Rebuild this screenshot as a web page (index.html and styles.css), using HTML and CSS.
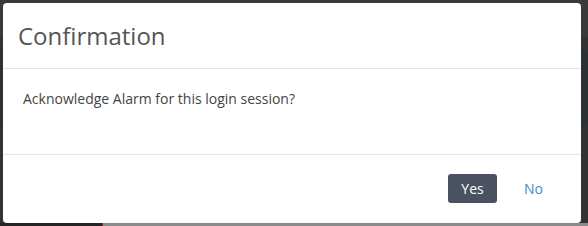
FILE: index.html
```html
<!DOCTYPE html>
<html>
<head>
<meta charset="utf-8">
<link rel="stylesheet" href="styles.css">
</head>
<body>
<div class="backdrop">
  <div class="modal">
    <div class="modal-header"><h4 class="modal-title">Confirmation</h4></div>
    <div class="modal-body">Acknowledge Alarm for this login session?</div>
    <div class="modal-footer">
      <button class="btn btn-yes">Yes</button>
      <button class="btn btn-no">No</button>
    </div>
  </div>
  <div class="bottom-strip"><span class="strip-dark"></span><span class="strip-red"></span><span class="strip-gray"></span></div>
</div>
</body>
</html>
```
FILE: styles.css
```css
html, body {
  margin: 0;
  padding: 0;
  width: 588px;
  height: 226px;
  overflow: hidden;
  background: #353535;
  font-family: "Open Sans", "DejaVu Sans", sans-serif;
}
.backdrop {
  width: 588px;
  height: 226px;
  padding: 3px 0 0 3px;
  box-sizing: border-box;
  background: linear-gradient(#3a3a3a 0, #3a3a3a 37px, #333 37px, #333 50px, #2c3234 50px, #2c3234 125px, #333 125px);
  position: relative;
}
.modal {
  width: 578px;
  height: 220px;
  background: #fff;
  border-radius: 4px;
  display: flex;
  flex-direction: column;
  position: relative;
  z-index: 1;
}
.modal-header {
  padding: 15px 15px;
  border-bottom: 1px solid #e5e5e5;
}
.modal-title {
  margin: 0;
  font-size: 24px;
  line-height: 35px;
  font-weight: 400;
  color: #555;
}
.modal-body {
  padding: 20px 20px 45px;
  font-size: 14px;
  line-height: 20px;
  color: #444;
}
.modal-footer {
  flex: 1;
  border-top: 1px solid #e5e5e5;
  display: flex;
  justify-content: flex-end;
  align-items: flex-start;
  padding: 19px 26px 0 0;
  gap: 15px;
}
.btn {
  font-family: "Open Sans", "DejaVu Sans", sans-serif;
  font-size: 14px;
  border: none;
  height: 29px;
  padding: 0 12px;
  border-radius: 3px;
  cursor: pointer;
  margin: 0;
}
.btn-yes {
  background: #4a5160;
  color: #fff;
  width: 49px;
  padding: 0;
}
.btn-no {
  background: transparent;
  color: #3d8ccc;
}
.bottom-strip {
  position: absolute;
  left: 0;
  bottom: 0;
  width: 588px;
  height: 3px;
  display: flex;
}
.strip-dark { width: 102px; background: #252525; }
.strip-red { width: 1px; background: #a01c1c; }
.strip-gray { flex: 1; background: #8a8a8a; }
```
